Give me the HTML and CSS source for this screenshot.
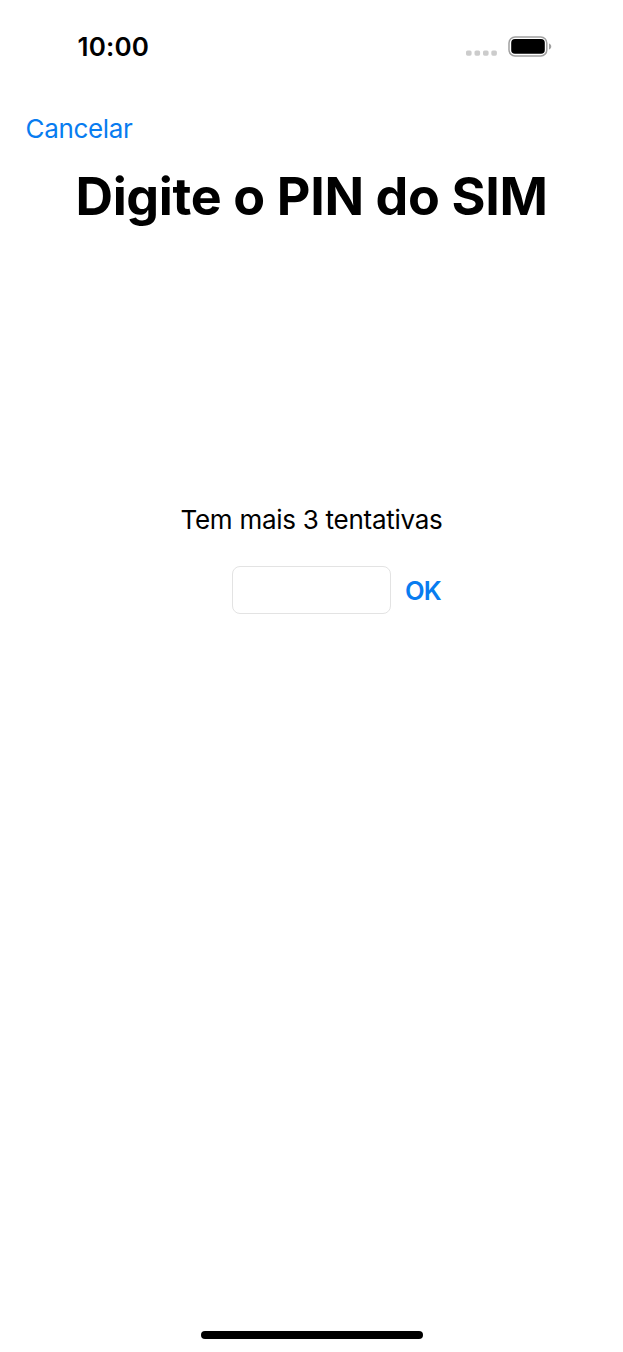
FILE: index.html
```html
<!DOCTYPE html>
<html lang="pt">
<head>
<meta charset="utf-8">
<title>PIN do SIM</title>
<link rel="stylesheet" href="styles.css">
</head>
<body>
<div class="screen">
  <header class="status">
    <span class="time">10:00</span>
    <div class="indicators">
      <svg class="signal" width="32" height="6" viewBox="0 0 32 6"><g fill="#ccc"><rect x="0" y="0.5" width="5.6" height="5.2" rx="1.6"/><rect x="8.5" y="0.5" width="5.6" height="5.2" rx="1.6"/><rect x="17" y="0.5" width="5.6" height="5.2" rx="1.6"/><rect x="25.3" y="0.5" width="5.6" height="5.2" rx="1.6"/></g></svg>
      <svg class="battery" width="44" height="22" viewBox="0 0 44 22"><rect x="1" y="1.9" width="37.8" height="19" rx="6" fill="none" stroke="#a0a0a0" stroke-width="1.5"/><rect x="3.2" y="4.1" width="33.6" height="14.6" rx="3.8"/><path d="M41 8.5c3 1 3 5 0 6z" fill="#a0a0a0"/></svg>
    </div>
  </header>
  <nav class="nav"><a class="cancel">Cancelar</a></nav>
  <h1 class="title">Digite o PIN do SIM</h1>
  <main class="content">
    <p class="attempts">Tem mais 3 tentativas</p>
    <form class="entry">
      <input class="pin" type="password" aria-label="PIN">
      <button class="ok" type="button">OK</button>
    </form>
  </main>
  <footer class="footer"><div class="home"></div></footer>
</div>
</body>
</html>
```
FILE: styles.css
```css
* { box-sizing: border-box; }
body { margin: 0; background: #fff; color: #000; font-family: Inter, "Liberation Sans", sans-serif; }
.screen { width: 623px; height: 1352px; display: flex; flex-direction: column; overflow: hidden; }
.status { height: 93px; padding: 31px 71px 0 77.5px; display: flex; justify-content: space-between; align-items: flex-start; }
.time { font-size: 26px; line-height: 32px; font-weight: 600; letter-spacing: 0.15px; }
.indicators { display: flex; gap: 10px; padding-top: 4px; }
.signal { margin-top: 15px; }
.nav { height: 71px; padding: 20px 25.5px 0; }
.cancel { color: #087cf0; font-size: 26px; line-height: 32px; letter-spacing: -0.35px; }
.title { margin: 0; height: 66px; text-align: center; font-size: 52px; line-height: 66px; font-weight: 700; letter-spacing: -0.36px; white-space: nowrap; }
.content { flex: 1; padding-top: 274px; }
.attempts { margin: 0; text-align: center; font-size: 26px; line-height: 32px; letter-spacing: -0.27px; }
.entry { display: flex; align-items: center; gap: 14px; margin: 30px 0 0 232px; }
.pin { width: 159px; height: 48px; border: 1px solid #e3e3e3; border-radius: 8px; background: #fff; outline: none; padding: 0 10px; font: inherit; font-size: 26px; }
.ok { border: 0; padding: 1px 0 0; background: none; color: #087cf0; font-family: inherit; font-size: 25.5px; line-height: 32px; font-weight: 600; letter-spacing: -0.9px; }
.footer { height: 21px; display: flex; justify-content: center; align-items: flex-start; }
.home { width: 222px; height: 8px; border-radius: 4px; background: #000; }
```
